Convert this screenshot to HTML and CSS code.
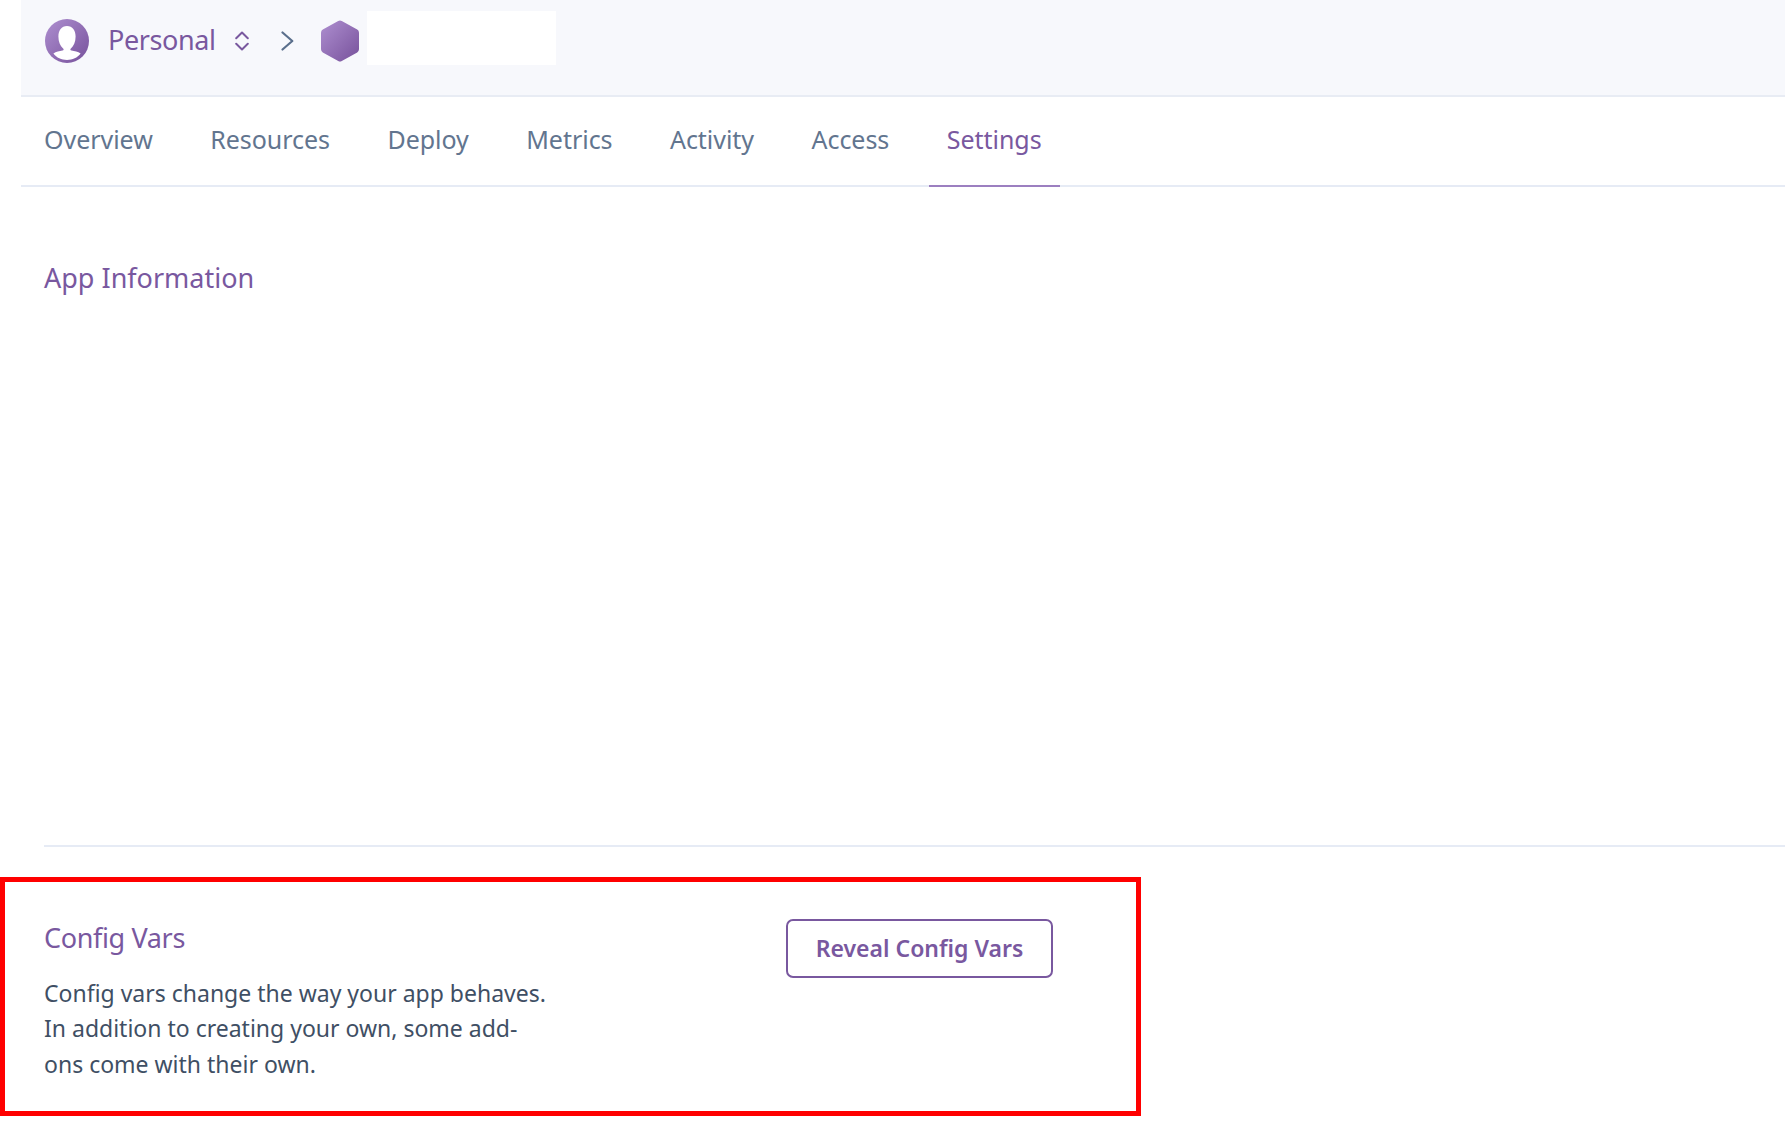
FILE: index.html
```
<!DOCTYPE html>
<html lang="en">
<head>
    <meta charset="UTF-8">
    <meta name="viewport" content="width=device-width, initial-scale=1.0">
    <title>Personal | Settings</title>
    <link rel="stylesheet" href="styles.css">
</head>
<body>
    <header class="top-bar">
        <svg class="avatar" viewBox="0 0 44 44">
            <defs>
                <linearGradient id="purple" x1="0" y1="0" x2="1" y2="1">
                    <stop offset="0" stop-color="#ae8fd0"/>
                    <stop offset="1" stop-color="#77519b"/>
                </linearGradient>
            </defs>
            <circle cx="22" cy="22" r="22" fill="url(#purple)"/>
            <path d="M22 7c-5.5 0-8.600 4.400-8.600 10.500 0 5.200 1.800 9.400 4.700 11.900.9.800.6 1.700-.6 2.100-3 .6-6.500 1.100-9.100 3.100C11.600 38.900 16.500 41 22 41s10.400-2.100 13.600-6.400c-2.600-2-6.100-2.500-9.100-3.100-1.200-.4-1.500-1.300-.6-2.100 2.900-2.500 4.700-6.700 4.700-11.900C30.600 11.400 27.500 7 22 7z" fill="#fff"/>
        </svg>
        <span class="account">Personal</span>
        <svg class="switcher" viewBox="0 0 14 20">
            <path d="M1.200 7.200L7 1.500l5.800 5.700M1.200 12.800L7 18.500l5.800-5.700"/>
        </svg>
        <svg class="chevron" viewBox="0 0 13 20">
            <path d="M1.500 1.500L11.300 10l-9.800 8.500"/>
        </svg>
        <svg class="app-icon" viewBox="0 0 38 42">
            <path d="M17.200.9a3.600 3.600 0 0 1 3.600 0l15.400 8.700A3.600 3.600 0 0 1 38 12.700v16.600a3.600 3.600 0 0 1-1.800 3.100l-15.400 8.700a3.600 3.600 0 0 1-3.600 0L1.800 32.400A3.600 3.600 0 0 1 0 29.300V12.700a3.600 3.600 0 0 1 1.800-3.100z" fill="url(#purple)"/>
        </svg>
        <div class="app-name"></div>
    </header>

    <nav class="tabs">
        <a class="tab">Overview</a>
        <a class="tab">Resources</a>
        <a class="tab">Deploy</a>
        <a class="tab">Metrics</a>
        <a class="tab">Activity</a>
        <a class="tab">Access</a>
        <a class="tab active">Settings</a>
    </nav>

    <main>
        <section class="app-info">
            <h2>App Information</h2>
        </section>

        <section class="config-vars">
            <div class="config-text">
                <h2>Config Vars</h2>
                <p>Config vars change the way your app behaves. In addition to creating your own, some add-<br>ons come with their own.</p>
            </div>
            <button class="reveal">Reveal Config Vars</button>
        </section>
    </main>
</body>
</html>
```

FILE: styles.css
```
* {
    box-sizing: border-box;
}
body {
    margin: 0;
    font-family: "Noto Sans", "Open Sans", sans-serif;
    background-color: #fff;
    color: #3f4f64;
}
h2 {
    margin: 0;
    font-size: 27px;
    font-weight: 400;
    line-height: 36px;
    color: #79589f;
}

/* Header */
.top-bar {
    display: flex;
    align-items: center;
    height: 97px;
    margin-left: 21px;
    padding: 0 0 14px 24px;
    background-color: #f7f8fc;
    border-bottom: 2px solid #e8ecf4;
}
.avatar {
    width: 44px;
    height: 44px;
}
.account {
    width: 107px;
    margin-left: 19px;
    padding-bottom: 2px;
    font-size: 27px;
    letter-spacing: -0.4px;
    color: #79589f;
}
.switcher {
    width: 14px;
    height: 20px;
    margin: 1px 0 0 20px;
    fill: none;
    stroke: #79589f;
    stroke-width: 2;
    stroke-linecap: round;
    stroke-linejoin: round;
}
.chevron {
    width: 13px;
    height: 20px;
    margin-left: 32px;
    fill: none;
    stroke: #5a6f8c;
    stroke-width: 2.2;
    stroke-linecap: round;
    stroke-linejoin: round;
}
.app-icon {
    width: 38px;
    height: 42px;
    margin-left: 27px;
}
.app-name {
    width: 189px;
    height: 54px;
    margin: -5px 0 0 8px;
    background-color: #fff;
}

/* Tabs */
.tabs {
    display: flex;
    gap: 21.4px;
    height: 90px;
    margin-left: 21px;
    padding-left: 5px;
    border-bottom: 2px solid #e6ebf5;
}
.tab {
    height: 90px;
    padding: 0 18px;
    font-size: 25px;
    line-height: 85px;
    letter-spacing: -0.03px;
    color: #62758f;
}
.tab.active {
    color: #79589f;
    border-bottom: 2px solid #9c7fc0;
}

/* Sections */
.app-info {
    height: 660px;
    margin-left: 44px;
    padding-top: 73px;
    border-bottom: 2px solid #e6ebf5;
}
.config-vars {
    display: flex;
    align-items: flex-start;
    width: 1141px;
    height: 239px;
    margin-top: 30px;
    padding: 37px 0 0 39px;
    border: 5px solid #f00;
}
.config-text {
    width: 742px;
    padding-top: 1px;
}
.config-text h2 {
    letter-spacing: -0.35px;
}
.config-text p {
    width: 510px;
    margin: 20px 0 0;
    font-size: 23px;
    line-height: 35.3px;
}
.reveal {
    width: 267px;
    height: 59px;
    padding: 0 0 2px;
    font-family: inherit;
    font-size: 23px;
    font-weight: 600;
    color: #79589f;
    background-color: #fff;
    border: 2px solid #79589f;
    border-radius: 7px;
}
```
